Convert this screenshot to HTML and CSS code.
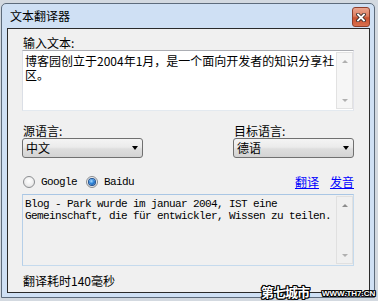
FILE: index.html
```html
<!DOCTYPE html>
<html>
<head>
<meta charset="utf-8">
<title>文本翻译器</title>
<link rel="stylesheet" href="styles.css">
</head>
<body>
<div class="window">
  <div class="titlebar">
    <span class="title">文本翻译器</span>
    <div class="close">
      <svg width="10" height="9" viewBox="0 0 10 9">
        <path d="M2 1.5 L8 7.5 M8 1.5 L2 7.5" stroke="#3b2a28" stroke-width="3.6" stroke-linecap="square" fill="none"/>
        <path d="M2 1.5 L8 7.5 M8 1.5 L2 7.5" stroke="#ffffff" stroke-width="1.8" stroke-linecap="square" fill="none"/>
      </svg>
    </div>
  </div>
  <div class="client">
    <div class="label first">输入文本:</div>
    <div class="textbox input">
      <div class="tb-text cjk">博客园创立于2004年1月，是一个面向开发者的知识分享社<br>区。</div>
      <div class="scroll"><span class="arr up"></span><span class="arr down"></span></div>
    </div>
    <div class="langs">
      <div class="lang">
        <div class="label">源语言:</div>
        <div class="select"><span>中文</span><span class="caret"></span></div>
      </div>
      <div class="lang">
        <div class="label">目标语言:</div>
        <div class="select"><span>德语</span><span class="caret"></span></div>
      </div>
    </div>
    <div class="options">
      <div class="radio"><span class="circle"></span><span class="mono">Google</span></div>
      <div class="radio"><span class="circle checked"></span><span class="mono">Baidu</span></div>
      <div class="links"><a class="link">翻译</a><a class="link">发音</a></div>
    </div>
    <div class="textbox output">
      <div class="tb-text mono">Blog - Park wurde im januar 2004, IST eine<br>Gemeinschaft, die für entwickler, Wissen zu teilen.</div>
      <div class="scroll"><span class="arr up dark"></span><span class="arr down"></span></div>
    </div>
    <div class="status">翻译耗时140毫秒</div>
  </div>
</div>
<div class="watermark"><span class="wm-cn">第七城市</span><span class="wm-en">WWW.TH7.CN</span></div>
</body>
</html>
```
FILE: styles.css
```css
* { box-sizing: border-box; }
html, body { margin: 0; padding: 0; }
body {
  width: 378px;
  height: 301px;
  overflow: hidden;
  position: relative;
  background: #d3d9e0;
  font-family: "Noto Sans CJK SC", "Noto Sans", sans-serif;
  font-size: 12px;
  color: #000;
}
.window {
  margin: 3px 0 0 1px;
  width: 374px;
  height: 295px;
  border: 1px solid #5d6b7b;
  border-radius: 5px 5px 0 0;
  background: #cfe0f4;
  padding: 0 4px 4px 5px;
  display: flex;
  flex-direction: column;
}
.titlebar {
  height: 24px;
  display: flex;
  align-items: flex-start;
  justify-content: space-between;
}
.title {
  margin: 4px 0 0 3px;
  line-height: 15px;
}
.close {
  margin-top: 3px;
  width: 18px;
  height: 20px;
  border: 1px solid #8e3f2c;
  border-radius: 3px;
  background: linear-gradient(#eaa58f 0%, #dc7d60 45%, #c9502f 55%, #d9704e 100%);
  display: flex;
  align-items: center;
  justify-content: center;
}
.close svg { display: block; }
.client {
  flex: 1;
  border: 1px solid #2a2a2a;
  background: #f0f0f0;
  padding: 6px 15px 0 14px;
  display: flex;
  flex-direction: column;
}
.label {
  line-height: 14px;
  padding-left: 1px;
}
.label.first { line-height: 15px; }
.textbox {
  display: flex;
  border: 1px solid;
}
.input {
  height: 61px;
  background: #ffffff;
  border-color: #abadb3 #e2e3ea #e3e9ef #dbdfe6;
}
.output {
  margin-top: 5px;
  height: 72px;
  background: #f0f0f0;
  border-color: #a9c6e4 #c5daed #c5daed #b6cfe8;
}
.tb-text { flex: 1; white-space: nowrap; }
.tb-text.cjk { padding: 3px 0 0 2px; line-height: 14px; }
.tb-text.mono { padding: 3px 0 0 2px; line-height: 12px; }
.mono {
  font-family: "Liberation Mono", "DejaVu Sans Mono", monospace;
  font-size: 11px;
  letter-spacing: -0.6px;
}
.scroll {
  width: 17px;
  margin: 1px 0;
  border: 1px solid #e2e2e2;
  background: #f6f6f6;
  display: flex;
  flex-direction: column;
  justify-content: space-between;
  align-items: center;
  padding: 7px 0 6px;
}
.output .scroll { background: #f0f0f0; border-color: #e0e0e0; }
.arr {
  width: 0;
  height: 0;
  border-left: 3px solid transparent;
  border-right: 3px solid transparent;
}
.arr.up { border-bottom: 3px solid #b0b0b0; }
.arr.down { border-top: 3px solid #b0b0b0; }
.arr.up.dark { border-bottom-color: #8c8c8c; }
.langs {
  margin-top: 13px;
  display: flex;
  justify-content: space-between;
}
.lang { width: 121px; display: flex; flex-direction: column; }
.select {
  height: 20px;
  border: 1px solid #707070;
  border-radius: 3px;
  background: linear-gradient(#f4f4f4 0%, #ebebeb 45%, #dedede 55%, #d3d3d3 100%);
  display: flex;
  align-items: center;
  justify-content: space-between;
  padding: 0 4px 0 3px;
  line-height: 14px;
}
.caret {
  width: 0;
  height: 0;
  border-left: 3.5px solid transparent;
  border-right: 3.5px solid transparent;
  border-top: 4px solid #000;
}
.options {
  margin-top: 17px;
  height: 14px;
  display: flex;
  align-items: center;
}
.radio {
  display: flex;
  align-items: center;
  gap: 6px;
  margin-left: 1px;
  margin-right: 8px;
}
.circle {
  width: 12px;
  height: 12px;
  border-radius: 50%;
  border: 1px solid #8b8d90;
  background: radial-gradient(circle at 50% 40%, #ffffff 0%, #f0f0f0 50%, #d6d6d6 100%);
  display: flex;
  align-items: center;
  justify-content: center;
}
.circle.checked::after {
  content: "";
  width: 6px;
  height: 6px;
  border-radius: 50%;
  background: radial-gradient(circle at 40% 35%, #a8dcff 0%, #2f86dc 45%, #0e3f86 100%);
  box-shadow: 0 0 0 1px #1d4f8f;
}
.links {
  margin-left: auto;
  display: flex;
  gap: 11px;
  line-height: 14px;
}
.link {
  color: #0000ff;
  text-decoration: underline;
}
.status {
  margin-top: 8px;
  line-height: 14px;
  padding-left: 1px;
}
.watermark {
  position: absolute;
  left: 261px;
  top: 283px;
  display: flex;
  align-items: flex-end;
  gap: 13px;
  color: #ffffff;
  text-shadow: 1px 0 #000, -1px 0 #000, 0 1px #000, 0 -1px #000, 1px 1px #000, -1px -1px #000, 1px -1px #000, -1px 1px #000;
}
.wm-cn {
  font-size: 13px;
  font-weight: bold;
  line-height: 17px;
  letter-spacing: -1px;
}
.wm-en {
  font-family: "Liberation Sans", sans-serif;
  font-size: 8px;
  font-weight: bold;
  line-height: 9px;
  margin-bottom: 2px;
}
```
